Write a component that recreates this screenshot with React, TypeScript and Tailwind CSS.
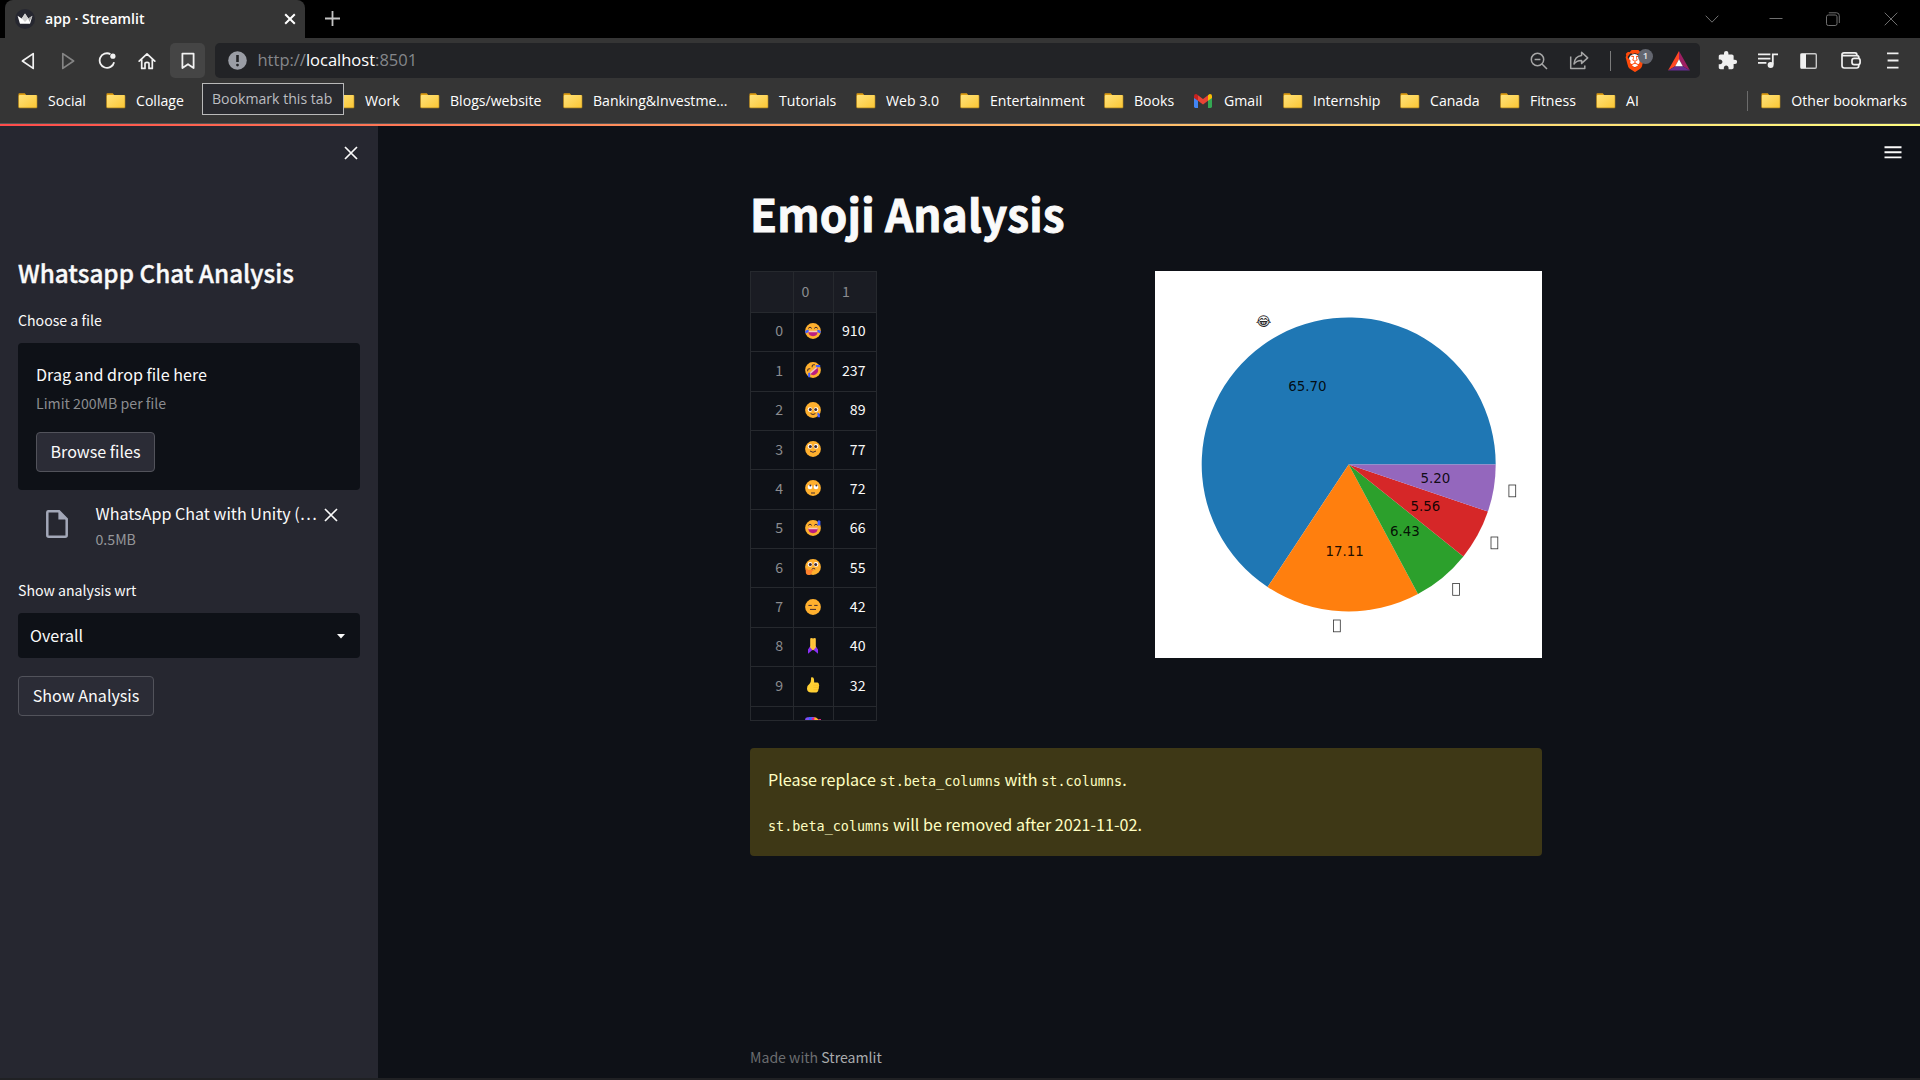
import type { ReactNode } from "react";
import { MdExtension } from "react-icons/md";
import { SiBrave } from "react-icons/si";

const UI = "font-['Open_Sans','Noto_Sans',sans-serif]";
const BODY = "font-['Noto_Sans_CJK_SC','Noto_Sans',sans-serif]";

type Bookmark = { label: string; width: string; gmail?: boolean };

const bookmarks: Bookmark[] = [
  { label: "Social", width: "w-[88px]" },
  { label: "Collage", width: "w-[229px]" },
  { label: "Work", width: "w-[85px]" },
  { label: "Blogs/website", width: "w-[143px]" },
  { label: "Banking&Investme...", width: "w-[186px]" },
  { label: "Tutorials", width: "w-[107px]" },
  { label: "Web 3.0", width: "w-[104px]" },
  { label: "Entertainment", width: "w-[144px]" },
  { label: "Books", width: "w-[90px]" },
  { label: "Gmail", width: "w-[89px]", gmail: true },
  { label: "Internship", width: "w-[117px]" },
  { label: "Canada", width: "w-[100px]" },
  { label: "Fitness", width: "w-[96px]" },
  { label: "AI", width: "w-[60px]" },
];

function Folder() {
  return (
    <svg width="20" height="16" viewBox="0 0 20 16" className="shrink-0">
      <defs>
        <linearGradient id="folder" x1="0" y1="0" x2="1" y2="1">
          <stop offset="0" stopColor="#ffe27a" />
          <stop offset="1" stopColor="#fbc735" />
        </linearGradient>
      </defs>
      <path d="M0.5 1.5A1 1 0 0 1 1.5 .3H6.8L8.2 2H18.5V14.5H0.5Z" fill="#dd9c10" />
      <rect x="0.5" y="2" width="18.8" height="13.2" rx="1" fill="#b58a22" />
      <rect x="0.9" y="2" width="17.8" height="12.6" rx="0.8" fill="url(#folder)" />
    </svg>
  );
}

function GmailIcon() {
  return (
    <svg width="18" height="14" viewBox="0 0 18 14" className="mr-[2px] shrink-0">
      <path d="M0 2V12.6Q0 14 1.4 14H4V5Z" fill="#4285f4" />
      <path d="M14 5V14H16.6Q18 14 18 12.6V2Z" fill="#34a853" />
      <path d="M4 1.3V6.8L9 10.5L14 6.8V1.3L9 5.1Z" fill="#ea4335" />
      <path d="M0 2Q0 0 2 0Q2.6 0 4 1.3V6.8L0 3.9Z" fill="#c5221f" />
      <path d="M18 2Q18 0 16 0Q15.4 0 14 1.3V6.8L18 3.9Z" fill="#fbbc04" />
    </svg>
  );
}

function BookmarkItem({ item }: { item: Bookmark }) {
  return (
    <div className={`flex shrink-0 items-center ${item.width}`}>
      {item.gmail ? <GmailIcon /> : <Folder />}
      <span className="ml-[10px] whitespace-nowrap">{item.label}</span>
    </div>
  );
}

function Cell({ w, children }: { w: string; children: ReactNode }) {
  return <div className={`flex h-full shrink-0 items-center justify-center ${w}`}>{children}</div>;
}

function TabStrip() {
  return (
    <div className="flex h-[38px] bg-black pl-[5px] text-white">
      <div className="flex w-[300px] items-center rounded-t-lg bg-[#353535] pr-[9px] pl-[10px]">
        <svg width="20" height="20" viewBox="0 0 20 20">
          <circle cx="10" cy="10" r="10" fill="#262730" />
          <path d="M2.6 6.8L6.7 9.5L10 4.6L13.3 9.5L17.4 6.8L15.2 14.2Q15 14.8 14.4 14.8H5.6Q5 14.8 4.8 14.2Z" fill="#fff" />
          <path d="M6.7 9.5L10 4.6L13.3 9.5L10 13Z" fill="#cfcfcf" />
          <path d="M17.4 6.8L13.3 9.5L14.4 13Z" fill="#a8a8a8" />
        </svg>
        <span className="ml-[10px] text-[14.1px] font-semibold">app · Streamlit</span>
        <svg width="12" height="12" viewBox="0 0 12 12" className="ml-auto">
          <path d="M1.2 1.2L10.8 10.8M10.8 1.2L1.2 10.8" stroke="#fff" strokeWidth="2" />
        </svg>
      </div>
      <svg width="15" height="15" viewBox="0 0 15 15" className="mt-[11px] ml-5">
        <path d="M7.5 0V15M0 7.5H15" stroke="#c4c4c4" strokeWidth="1.8" />
      </svg>
      <div className="ml-auto flex items-center pr-[22px]">
        <svg width="14" height="14" viewBox="0 0 14 14" className="mr-[50px]" fill="none" stroke="#6f6f6f">
          <path d="M.7 3.7L7 10.2L13.3 3.7" />
        </svg>
        <svg width="14" height="14" viewBox="0 0 14 14" className="mr-[43px]" stroke="#6f6f6f">
          <path d="M.5 6.5H13.5" />
        </svg>
        <svg width="14" height="14" viewBox="0 0 14 14" className="mr-[44px]" fill="none" stroke="#6f6f6f">
          <rect x=".5" y="3" width="10.5" height="10.5" rx="1.8" />
          <path d="M2.8 .8H10.5Q13.3 .8 13.3 3.6V11" />
        </svg>
        <svg width="14" height="14" viewBox="0 0 14 14" stroke="#6f6f6f">
          <path d="M.7 .7L13.3 13.3M13.3 .7L.7 13.3" />
        </svg>
      </div>
    </div>
  );
}

function Toolbar() {
  return (
    <div className="flex h-[45px] items-center px-2">
      <Cell w="w-[40px]">
        <svg width="16" height="18" viewBox="0 0 16 18" fill="none" stroke="#f2f2f2" strokeWidth="1.7" strokeLinejoin="round">
          <path d="M13.2 1.6V16.4L2.4 9Z" />
        </svg>
      </Cell>
      <Cell w="w-[40px]">
        <svg width="16" height="18" viewBox="0 0 16 18" fill="none" stroke="#858585" strokeWidth="1.7" strokeLinejoin="round">
          <path d="M2.8 1.6V16.4L13.6 9Z" />
        </svg>
      </Cell>
      <Cell w="w-[39px]">
        <svg width="19" height="18" viewBox="0 0 19 18" fill="none">
          <path d="M12.4 2.1A7.3 7.3 0 1 0 16.1 10.2" stroke="#f2f2f2" strokeWidth="1.8" />
          <circle cx="14.9" cy="4.2" r="2.6" fill="#f2f2f2" />
        </svg>
      </Cell>
      <Cell w="w-[40px]">
        <svg width="18" height="18" viewBox="0 0 18 18" fill="none" stroke="#f2f2f2" strokeWidth="1.7" strokeLinejoin="round" strokeLinecap="round">
          <path d="M1.2 9.2L9 1.8L16.8 9.2M3.7 7.4V16.4H7V11.6Q7 10.4 9 10.4T11 11.6V16.4H14.3V7.4" />
        </svg>
      </Cell>
      <div className="ml-[3px] flex h-[35px] w-[35px] shrink-0 items-center justify-center rounded-[5px] bg-[#454545]">
        <svg width="14" height="18" viewBox="0 0 14 18" fill="none" stroke="#f2f2f2" strokeWidth="1.8" strokeLinejoin="round">
          <path d="M1.4 1.6H12.6V16L7 12.2L1.4 16Z" />
        </svg>
      </div>
      <div className="ml-[10px] flex h-[35px] w-[1485px] shrink-0 items-center rounded-[5px] bg-[#222326]">
        <svg width="19" height="19" viewBox="0 0 19 19" className="ml-[13px]">
          <circle cx="9.5" cy="9.5" r="9.3" fill="#9a9da5" />
          <path d="M9.5 4V11" stroke="#222326" strokeWidth="2.6" />
          <circle cx="9.5" cy="14.1" r="1.4" fill="#222326" />
        </svg>
        <div className="ml-[10.5px] text-[16.5px] text-[#85878b]">
          http://<span className="text-white">localhost</span>:8501
        </div>
        <div className="ml-auto flex h-full items-center pr-[10px]">
          <svg width="18" height="18" viewBox="0 0 18 18" className="mr-[21px]" fill="none" stroke="#a6a6a6" strokeWidth="1.5">
            <circle cx="7.5" cy="7.5" r="6.2" />
            <path d="M12 12L17 17M4.6 7.5H10.4" />
          </svg>
          <svg width="20" height="19" viewBox="0 0 20 19" className="mr-[21px]" fill="none" stroke="#a6a6a6" strokeWidth="1.5" strokeLinejoin="round">
            <path d="M1.7 5.5V17.6H15.8V14.4" />
            <path d="M12.6 1.3L18.7 6.9L12.6 12.4V9.4Q7.8 9.2 5 13Q5.6 5.2 12.6 4.4Z" />
          </svg>
          <div className="mr-[14px] h-5 w-px bg-[#7b7b7b]" />
          <div className="relative mr-[24px] flex h-[24px] w-[19px] items-center justify-center">
            <div className="absolute top-[5px] left-[4px] h-[13px] w-[11px] rounded-full bg-white" />
            <SiBrave className="relative h-[22px] w-[22px] shrink-0 text-[#ff4a0a]" />
            <div className="absolute top-0 left-[13px] flex h-[15px] w-[15px] items-center justify-center rounded-full bg-[#63666f] text-[9.5px] leading-none font-semibold text-[#e8e8ea]">
              1
            </div>
          </div>
          <svg width="22" height="20" viewBox="0 0 22 20">
            <path d="M11 0L0 19.5L7.2 15.2L11 8.2Z" fill="#ff4724" />
            <path d="M11 0L22 19.5L14.8 15.2L11 8.2Z" fill="#9e1f63" />
            <path d="M0 19.5H22L14.8 15.2H7.2Z" fill="#662d91" />
            <path d="M11 8.2L14.8 15.2H7.2Z" fill="#fff" />
          </svg>
        </div>
      </div>
      <div className="flex h-full items-center text-[#f0f0f0]">
        <MdExtension className="ml-[17px] h-[21px] w-[21px]" />
        <svg width="20" height="16" viewBox="0 0 20 16" className="ml-[20px]" fill="none" stroke="#f0f0f0" strokeWidth="1.8">
          <path d="M0 1.4H12.4M0 5.6H12.4M0 9.8H8.4M14.8 11.5V1.4H20" />
          <circle cx="12.6" cy="12" r="3" fill="#f0f0f0" stroke="none" />
        </svg>
        <svg width="17" height="16" viewBox="0 0 17 16" className="ml-[21.5px]">
          <rect x=".7" y=".7" width="15.6" height="14.6" rx="1.2" fill="none" stroke="#c9c9c9" strokeWidth="1.4" />
          <rect x="1" y="1" width="5" height="14" fill="#f0f0f0" />
        </svg>
        <svg width="20" height="17" viewBox="0 0 20 17" className="ml-[24px]" fill="none" stroke="#f0f0f0" strokeWidth="1.7">
          <path d="M17.8 6.4V5.4Q17.8 3.6 16 3.6H3Q1 3.6 1 2.6Q1 .9 3 .9H14Q16 .9 16 3.4M1 2.6V13.6Q1 16 3.4 16H15.6Q17.8 16 17.8 13.8V12.6" />
          <rect x="11" y="6.4" width="8.1" height="6.2" rx="2.2" />
        </svg>
        <svg width="12" height="17" viewBox="0 0 12 17" className="ml-[26.5px]" stroke="#f0f0f0" strokeWidth="1.8">
          <path d="M0 1.3H11.5M.6 8.5H11.5M0 15.7H11.5" />
        </svg>
      </div>
    </div>
  );
}

function BrowserChrome() {
  return (
    <header className={`shrink-0 bg-[#353535] ${UI}`}>
      <TabStrip />
      <Toolbar />
      <div className="relative flex h-[40px] items-start pt-[7px] pl-[18px] text-[14.1px] leading-[21px] text-white">
        {bookmarks.map((b) => (
          <BookmarkItem key={b.label} item={b} />
        ))}
        <div className="absolute top-0 left-[202px] h-[32px] w-[142px] border border-[#b9b9b9] bg-[#292a2f] pl-[9px] leading-[29px] whitespace-nowrap text-[#bcbdc1]">
          Bookmark this tab
        </div>
        <div className="ml-auto flex pr-[13px]">
          <div className="mt-[1px] mr-[13px] h-5 w-px bg-[#6c6c6c]" />
          <div className="flex items-center">
            <Folder />
            <span className="ml-[10px] whitespace-nowrap">Other bookmarks</span>
          </div>
        </div>
      </div>
      <div className="h-px bg-[#565656]" />
      <div className="h-[2px] bg-linear-to-r from-[#ff4b4b] to-[#fffd80]" />
    </header>
  );
}

function Close() {
  return (
    <svg width="14" height="14" viewBox="0 0 14 14" stroke="#fafafa" strokeWidth="1.7">
      <path d="M1 1L13 13M13 1L1 13" />
    </svg>
  );
}

function Sidebar() {
  return (
    <aside className="flex w-[378px] shrink-0 flex-col bg-[#262730] px-[18px] text-[#fafafa]">
      <div className="flex h-[132px] justify-end pt-[20px] pr-[2px]">
        <Close />
      </div>
      <h1 className="h-[52px] text-[24.3px] leading-[30px] font-medium whitespace-nowrap [-webkit-text-stroke:0.35px_#fafafa]">
        Whatsapp Chat Analysis
      </h1>
      <div className="h-[33px] text-[14.15px] leading-[21px]">Choose a file</div>
      <div className="h-[147px] rounded bg-[#0e1117] px-[18px] pt-[19px]">
        <div className="text-[16.1px] leading-6">Drag and drop file here</div>
        <div className="mt-[7px] text-[14.15px] leading-[21px] text-[#8b8c8f]">Limit 200MB per file</div>
        <button className="mt-[18px] h-10 w-[119px] rounded border border-[#52535b] bg-[#2b2c36] pb-[2px] text-[16.1px] leading-6">
          Browse files
        </button>
      </div>
      <div className="flex h-[90px] pt-[11px] pl-[28px]">
        <svg width="22" height="28" viewBox="0 0 22 28" className="mt-[9px]">
          <path d="M2.6 1.2H13L20.7 9V25.2Q20.7 26.7 19.2 26.7H2.8Q1.3 26.7 1.3 25.2V2.6Q1.3 1.2 2.6 1.2Z" fill="none" stroke="#a3a8b8" strokeWidth="2.5" />
          <path d="M12.4 1V9.6H21Z" fill="#a3a8b8" />
        </svg>
        <div className="ml-[27.5px]">
          <div className="w-[225px] text-[16.1px] leading-6 whitespace-nowrap">WhatsApp Chat with Unity (…</div>
          <div className="mt-[4px] text-[14.15px] leading-[21px] text-[#95969a]">0.5MB</div>
        </div>
        <div className="mt-[7px] ml-[3.5px]">
          <Close />
        </div>
      </div>
      <div className="h-[33px] text-[14.15px] leading-[21px]">Show analysis wrt</div>
      <div className="flex h-[45px] items-center rounded bg-[#0e1117] pr-[15px] pl-[12px] text-[16.1px]">
        <span className="pb-[2px] leading-6">Overall</span>
        <svg width="8" height="5" viewBox="0 0 8 5" className="mt-[1px] ml-auto">
          <path d="M0 0H8L4 4.6Z" fill="#fafafa" />
        </svg>
      </div>
      <button className="mt-[18px] h-10 w-[136px] rounded border border-[#52535b] bg-[#2b2c36] pb-[2px] text-[16.1px] leading-6">
        Show Analysis
      </button>
    </aside>
  );
}

const SKIN = "#ffb02e";
const DARK = "#402a32";

function Face({ children }: { children: ReactNode }) {
  return (
    <>
      <circle cx="8" cy="8" r="7.9" fill={SKIN} />
      {children}
    </>
  );
}

function Eyes({ y = 6.6, up = false }: { y?: number; up?: boolean }) {
  return (
    <>
      <circle cx="5" cy={y} r="2.3" fill="#fff" />
      <circle cx="11" cy={y} r="2.3" fill="#fff" />
      <circle cx={up ? 5.4 : 5.3} cy={up ? y - 1.5 : y} r={up ? 1 : 1.5} fill={DARK} />
      <circle cx={up ? 11.4 : 10.7} cy={up ? y - 1.5 : y} r={up ? 1 : 1.5} fill={DARK} />
    </>
  );
}

const laugh = (
  <>
    <path d="M3.2 5.4Q5 2.8 6.8 5.4M9.2 5.4Q11 2.8 12.8 5.4" stroke={DARK} fill="none" strokeWidth="1" />
    <path d="M3.2 8H12.8Q12.6 13.2 8 13.2T3.2 8Z" fill="#bb1d80" />
    <path d="M3.2 7.8H12.8L12.5 9.3H3.5Z" fill="#f6cdb8" />
  </>
);

const emojis: Record<string, ReactNode> = {
  "😂": (
    <Face>
      {laugh}
      <path d="M0 8.4Q1 6.6 3.8 6.8Q4 9.6 1.6 10.2Q.2 10.4 0 8.4ZM16 8.4Q15 6.6 12.2 6.8Q12 9.6 14.4 10.2Q15.8 10.4 16 8.4Z" fill="#3f5fff" />
    </Face>
  ),
  "🤣": (
    <Face>
      <g transform="rotate(-42 8 8)">{laugh}</g>
      <path d="M10.6 3H15.2V5.2H11.4ZM3.2 11V15.2H5.2V10.6Z" fill="#3f5fff" />
    </Face>
  ),
  "🥲": (
    <Face>
      <Eyes y={7.6} />
      <path d="M5.6 11.6Q8 13.4 10.4 11.6" stroke={DARK} fill="none" />
      <path d="M12.4 10.6Q15 11 15 15.2H12.6Z" fill="#3f5fff" />
    </Face>
  ),
  "🙂": (
    <Face>
      <Eyes y={5.4} />
      <path d="M5 10Q8 12.6 11 10" stroke={DARK} fill="none" />
    </Face>
  ),
  "🙄": (
    <Face>
      <Eyes y={7} up />
      <path d="M6 13H10" stroke={DARK} fill="none" />
    </Face>
  ),
  "😅": (
    <Face>
      {laugh}
      <path d="M12.6 1.4Q14 -1 15.4 1.4V5.6H12.6Z" fill="#3f5fff" />
    </Face>
  ),
  "🤔": (
    <Face>
      <Eyes y={5.4} />
      <path d="M6.6 10.4Q8.5 8.6 10.2 10" stroke={DARK} fill="none" />
      <path d="M.8 9.2Q2.6 9 3 11L8.6 10.6Q9 12 7 12.4Q7 16 3.4 16Q.6 16 .8 12.6Z" fill="#ff822d" />
    </Face>
  ),
  "😑": (
    <Face>
      <path d="M3.4 6.4H6.8M9.2 6.4H12.6M5 10.4H11" stroke={DARK} fill="none" strokeWidth="1" />
    </Face>
  ),
  "🙏": (
    <>
      <path d="M5.4 8L3 11.4V15.8L8 11.6L13 15.8V11.4L10.6 8Z" fill="#8b2ff7" />
      <path d="M5.2 .4Q6.8 -.4 7.8 .8V0H8.2V.8Q9.4 -.4 10.8 .4V9.4L8 12.4L5.2 9.4Z" fill="#ffc83d" />
      <path d="M8 .4V11" stroke="#f5b033" strokeWidth=".5" />
    </>
  ),
  "👍": (
    <>
      <path d="M6 .6Q8.6 -.4 9 2.2L9.2 5.4H12.4Q14 5.8 13.8 7.2Q14.6 8.4 13.8 9.8Q14.2 11.2 13.4 12.4Q13.4 15.4 10 15.6H6.4Q2 15.4 2 11.4Q2 8.6 4.6 6.8Q6.4 4.6 6 .6Z" fill="#ffd034" />
      <path d="M8.4 8.2H13.4M8.4 10.4H13.6M8.4 12.8H13" stroke="#f3b01c" strokeWidth=".5" />
    </>
  ),
  "🥳": (
    <Face>
      <path d="M0 3Q0 .4 2.4 .2L9 0V4H0Z" fill="#7d4df2" />
      <path d="M4 0H6.6V4H4Z" fill="#3f5fff" />
      <path d="M7 1.2L9.4 .2V4H7ZM13.6 2H16V4H13.6Z" fill="#e0218a" />
    </Face>
  ),
};

function Emoji({ char }: { char: string }) {
  return (
    <svg width="16" height="16" viewBox="0 0 16 16" role="img" aria-label={char}>
      {emojis[char]}
    </svg>
  );
}

const rows: [string, string, string][] = [
  ["0", "😂", "910"],
  ["1", "🤣", "237"],
  ["2", "🥲", "89"],
  ["3", "🙂", "77"],
  ["4", "🙄", "72"],
  ["5", "😅", "66"],
  ["6", "🤔", "55"],
  ["7", "😑", "42"],
  ["8", "🙏", "40"],
  ["9", "👍", "32"],
  ["", "🥳", ""],
];

function DataTable() {
  return (
    <div className="h-[450px] w-[127px] overflow-hidden border border-[#26292e] text-[14.15px] leading-[21px]">
      <div className="flex h-[40.8px] border-b border-[#26292e] bg-[#1a1c23] text-[#8b8c8f]">
        <div className="w-[43px] border-r border-[#26292e]" />
        <div className="flex w-[40px] items-center border-r border-[#26292e] pb-[1px] pl-[7.5px]">0</div>
        <div className="flex items-center pb-[1px] pl-[8px]">1</div>
      </div>
      {rows.map(([i, e, n]) => (
        <div key={e} className="flex h-[39.38px] border-b border-[#26292e]">
          <div className="flex w-[43px] items-center justify-end border-r border-[#26292e] pr-[10px] pb-[2px] text-[#8b8c8f]">{i}</div>
          <div className="flex w-[40px] items-center justify-center border-r border-[#26292e] pr-[1px] pb-[2px]">
            <Emoji char={e} />
          </div>
          <div className="flex w-[42px] items-center justify-end pr-[10.5px] pb-[2px]">{n}</div>
        </div>
      ))}
    </div>
  );
}

const slices = [
  { share: 0.657, color: "#1f77b4", text: "65.70", x: 152.3, y: 119.6 },
  { share: 0.1711, color: "#ff7f0e", text: "17.11", x: 189.7, y: 285.4 },
  { share: 0.0643, color: "#2ca02c", text: "6.43", x: 250, y: 265.2 },
  { share: 0.0556, color: "#d62728", text: "5.56", x: 270.5, y: 240 },
  { share: 0.052, color: "#9467bd", text: "5.20", x: 280.5, y: 211.5 },
];

const missingGlyphs = [
  [178.5, 349],
  [297.7, 312.5],
  [336, 266],
  [353.9, 214],
];

function PieChart() {
  const cx = 193.7;
  const cy = 193.4;
  const r = 147;
  let start = 0;
  return (
    <svg width="387" height="387" viewBox="0 0 387 387" className="bg-white">
      {slices.map((s) => {
        const a0 = start * 2 * Math.PI;
        start += s.share;
        const a1 = start * 2 * Math.PI;
        const d = `M${cx} ${cy}L${cx + r * Math.cos(a0)} ${cy - r * Math.sin(a0)}A${r} ${r} 0 ${s.share > 0.5 ? 1 : 0} 0 ${cx + r * Math.cos(a1)} ${cy - r * Math.sin(a1)}Z`;
        return <path key={s.text} d={d} fill={s.color} />;
      })}
      <g className="font-['DejaVu_Sans',sans-serif] text-[13.4px]" textAnchor="middle">
        {slices.map((s) => (
          <text key={s.text} x={s.x} y={s.y} fillOpacity="0.9">
            {s.text}
          </text>
        ))}
        <text x="108.7" y="54.8" fillOpacity="0.85">
          😂
        </text>
      </g>
      {missingGlyphs.map(([x, y]) => (
        <rect key={x} x={x} y={y} width="6.8" height="11.8" fill="none" stroke="#333" strokeWidth=".8" />
      ))}
    </svg>
  );
}

function Code({ children }: { children: string }) {
  return <code className="font-['DejaVu_Sans_Mono',monospace] text-[13.45px] leading-none">{children}</code>;
}

export default function App() {
  return (
    <div className={`flex h-[1080px] w-[1920px] flex-col overflow-hidden bg-[#0e1117] ${BODY}`}>
      <BrowserChrome />
      <div className="flex h-[952px] shrink-0">
        <Sidebar />
        <main className="flex flex-1 text-[#fafafa]">
          <div className="ml-[372px] flex w-[792px] flex-col">
            <h1 className="h-[145px] pt-[54px] text-[44px] leading-[66px] font-bold tracking-[0.18px] whitespace-nowrap [-webkit-text-stroke:0.9px_#fafafa]">
              Emoji Analysis
            </h1>
            <div className="flex h-[477px] items-start justify-between">
              <DataTable />
              <PieChart />
            </div>
            <div className="h-[108px] rounded bg-[#3e3816] px-[18px] pt-[19px] text-[16.1px] leading-6 text-[#ffffc2]">
              <p>
                Please replace <Code>st.beta_columns</Code> with <Code>st.columns</Code>.
              </p>
              <p className="mt-[21px]">
                <Code>st.beta_columns</Code> will be removed after 2021-11-02.
              </p>
            </div>
            <footer className="mt-auto mb-[10px] text-[14.1px] leading-[21px] text-[#6b6d70]">
              Made with <span className="text-[#a9abad]">Streamlit</span>
            </footer>
          </div>
          <svg width="18" height="13" viewBox="0 0 18 13" className="mt-5 mr-[18px] ml-auto" stroke="#fafafa" strokeWidth="1.9">
            <path d="M.5 1.2H17.5M.5 6.3H17.5M.5 11.4H17.5" />
          </svg>
        </main>
      </div>
      <div className="h-[2px] shrink-0 bg-[#202124]" />
    </div>
  );
}
